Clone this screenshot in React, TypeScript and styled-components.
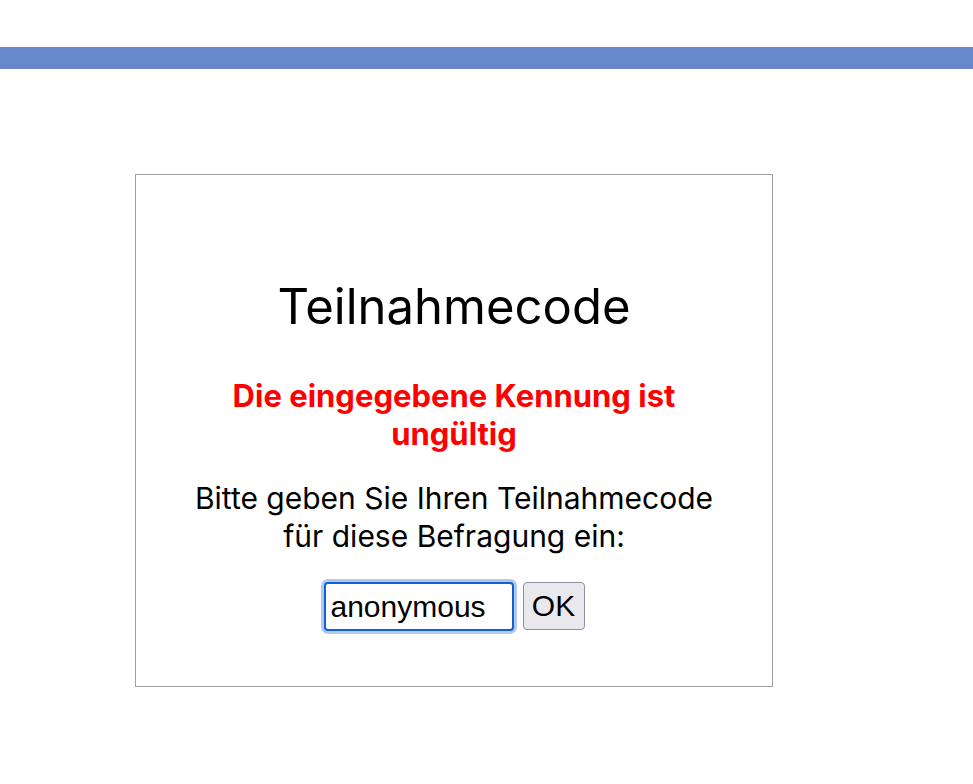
import styled, {createGlobalStyle} from "styled-components";
import {useState} from "react";

const GlobalStyle = createGlobalStyle`
    body {
        margin: 0;
        background: #ffffff;
        font-family: "Inter", "Noto Sans", sans-serif;
    }
`

export default function App() {
    const [code, setCode] = useState("anonymous");

    return <Page>
        <GlobalStyle/>
        <TopBar/>
        <Card>
            <Title>Teilnahmecode</Title>
            <Error>Die eingegebene Kennung ist ungültig</Error>
            <Prompt>Bitte geben Sie Ihren Teilnahmecode für diese Befragung ein:</Prompt>
            <Form onSubmit={e => e.preventDefault()}>
                <CodeInput value={code} onChange={e => setCode(e.target.value)} autoFocus/>
                <OkButton type="submit">OK</OkButton>
            </Form>
        </Card>
    </Page>
}

const Page = styled.div`
    padding-top: 47px;
`

const TopBar = styled.div`
    height: 22px;
    background: #6789cc;
`

const Card = styled.div`
    box-sizing: border-box;
    width: 638px;
    height: 513px;
    margin: 105px 0 0 135px;
    border: 1px solid #a0a0a0;
    padding: 0 50px;
    display: flex;
    flex-direction: column;
    align-items: center;
    text-align: center;
`

const Title = styled.h1`
    margin: 102px 0 0;
    font-weight: 400;
    font-size: 49px;
    line-height: 60px;
    color: #000;
`

const Error = styled.p`
    margin: 40px 0 0;
    font-weight: 700;
    font-size: 31px;
    line-height: 38px;
    color: #ff0000;
`

const Prompt = styled.p`
    margin: 26px 0 0;
    font-size: 30px;
    line-height: 38px;
    color: #000;
`

const Form = styled.form`
    margin-top: 27px;
    display: flex;
    align-items: flex-start;
    gap: 9px;
`

const CodeInput = styled.input`
    box-sizing: border-box;
    width: 190px;
    height: 49px;
    padding: 0 5px;
    font-family: "Liberation Sans", Arial, sans-serif;
    font-size: 30px;
    color: #000;
    border: 2px solid #0f62d6;
    border-radius: 4px;
    outline: none;
    box-shadow: 0 0 0 3px #b3c9ec;
`

const OkButton = styled.button`
    box-sizing: border-box;
    width: 62px;
    height: 48px;
    padding: 0;
    font-family: "Liberation Sans", Arial, sans-serif;
    font-size: 30px;
    color: #000;
    background: #e9e9ed;
    border: 1px solid #8f8f9d;
    border-radius: 4px;
`
